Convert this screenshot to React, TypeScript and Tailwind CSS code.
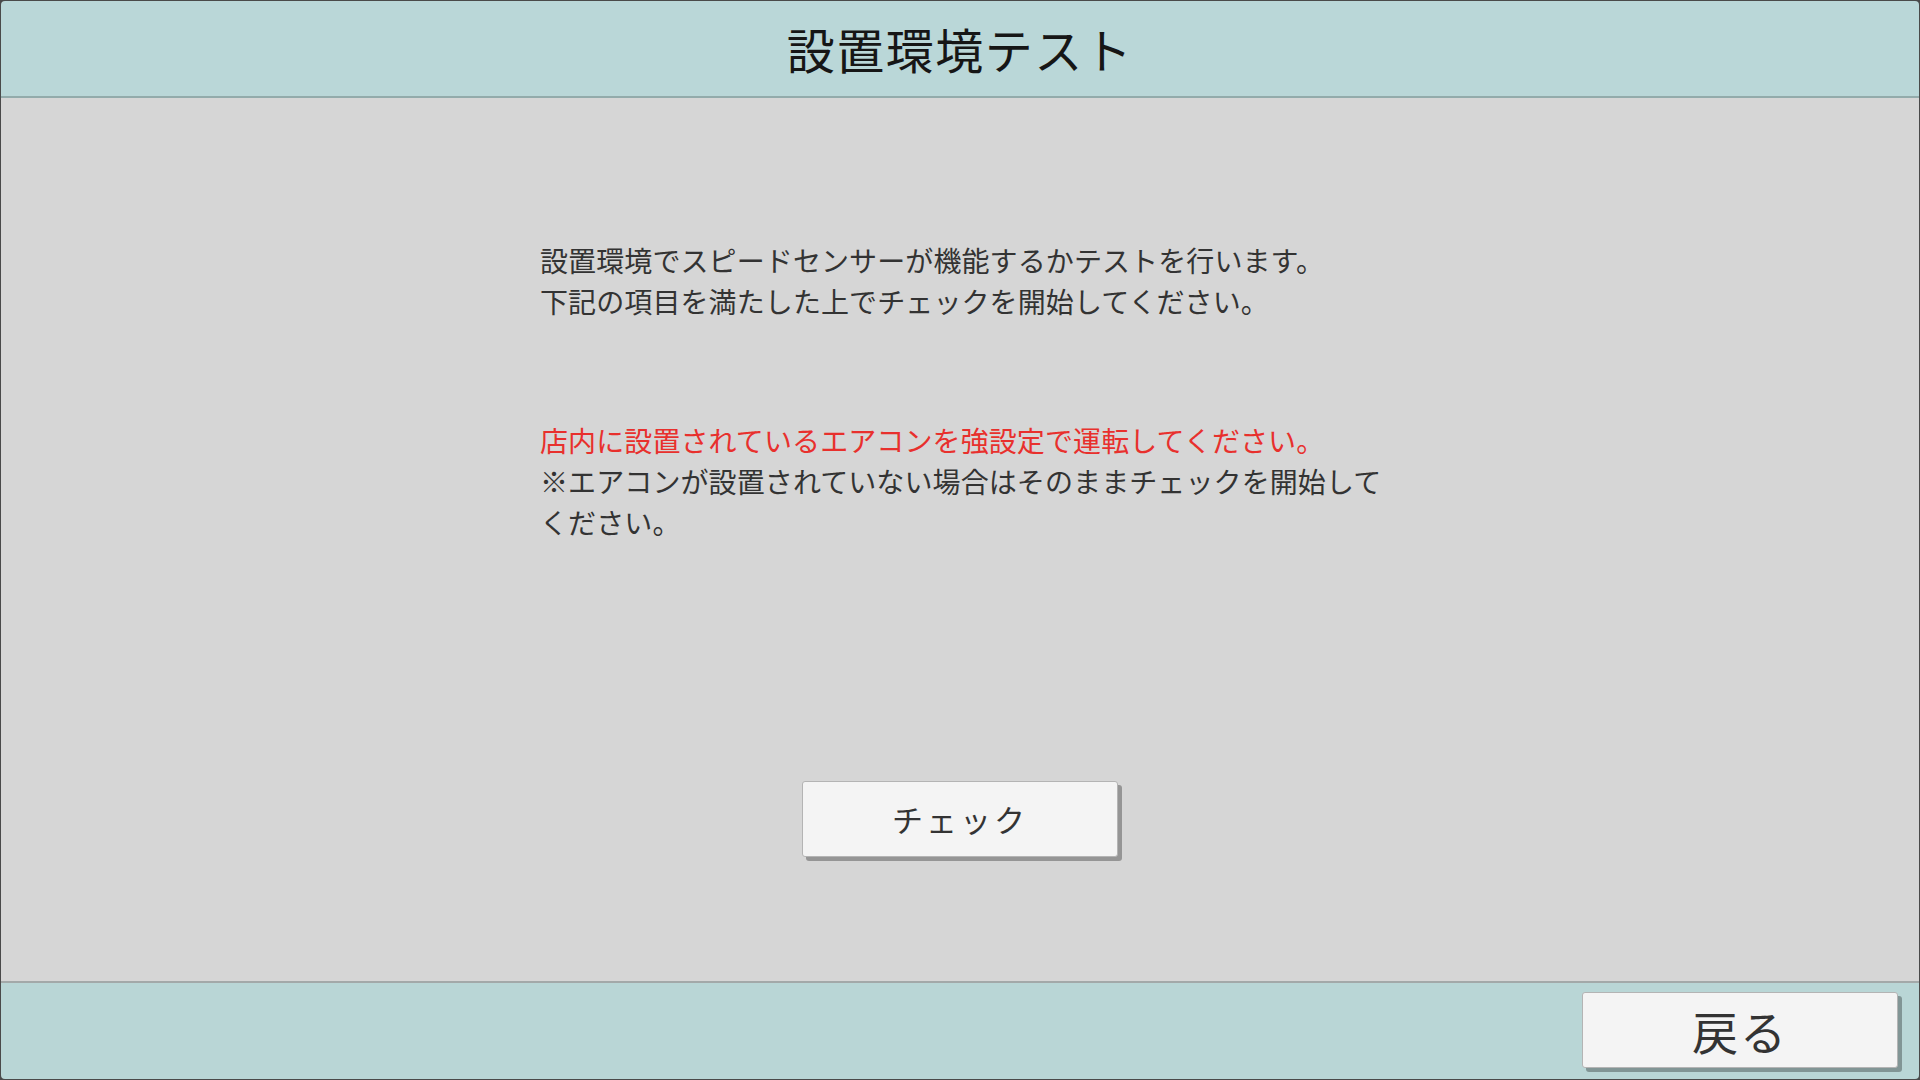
const font = "font-['Noto_Sans_CJK_JP','Noto_Sans',sans-serif]";

const PanelButton = ({ label, className }: { label: string; className: string }) => (
  <button
    className={`w-[316px] h-[76px] bg-[#f4f4f4] border border-[#b4b4b4] rounded-[3px] shadow-[4px_4px_0_rgba(0,0,0,0.3)] text-[#333] flex items-center justify-center ${className}`}
  >
    {label}
  </button>
);

export default function App() {
  return (
    <div className={`${font} w-[1920px] h-[1080px] bg-[#4a4a4a] p-px flex flex-col`}>
      <header className="h-[97px] shrink-0 bg-[#bad7d8] rounded-t-[4px] border-b-2 border-[#93abab] flex items-center justify-center">
        <h1 className="text-[48px] font-normal text-[#161616] tracking-[1.5px] leading-none pb-[2px]">
          設置環境テスト
        </h1>
      </header>

      <main className="flex-1 bg-[#d6d6d6] flex flex-col items-center pt-[142px]">
        <div className="self-start ml-[539px] w-[860px] text-[28px] leading-[41px] tracking-[0.1px] text-[#333]">
          <p>設置環境でスピードセンサーが機能するかテストを行います。</p>
          <p>下記の項目を満たした上でチェックを開始してください。</p>
          <p className="mt-[98px] text-[#e8302d]">
            店内に設置されているエアコンを強設定で運転してください。
          </p>
          <p>
            ※エアコンが設置されていない場合はそのままチェックを開始して
            <br />
            ください。
          </p>
        </div>
        <PanelButton label="チェック" className="mt-[238px] text-[31px] tracking-[3px]" />
      </main>

      <footer className="h-[98px] shrink-0 bg-[#b9d6d6] border-t-2 border-[#a3a9a9] rounded-b-[4px] flex justify-end items-start pt-[9px] pr-[21px]">
        <PanelButton label="戻る" className="text-[46px] tracking-[2px]" />
      </footer>
    </div>
  );
}
